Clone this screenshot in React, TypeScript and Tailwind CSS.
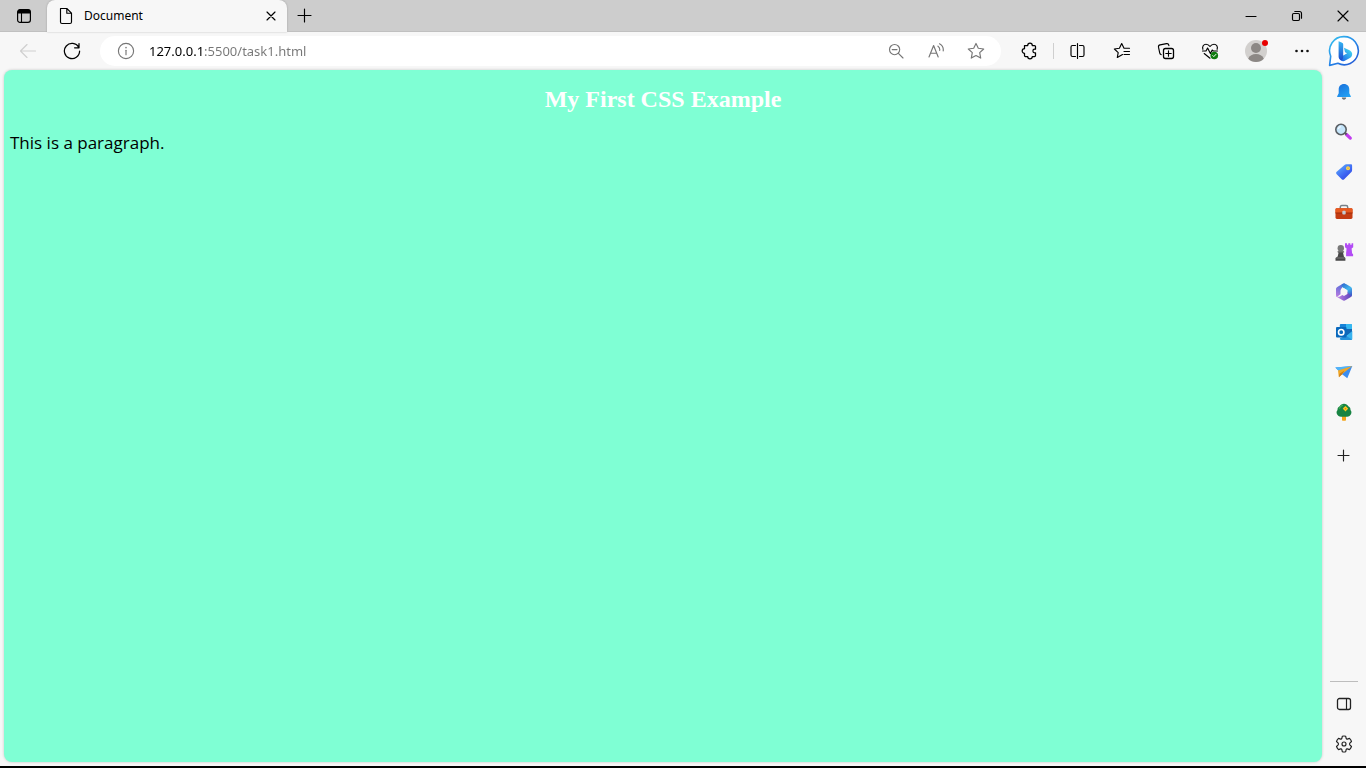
import type { ReactNode } from 'react';

type IconProps = { children: ReactNode; size?: number };

function Line({ children, size = 18 }: IconProps) {
  return (
    <svg
      width={size}
      height={size}
      viewBox={`0 0 ${size} ${size}`}
      fill="none"
      stroke="currentColor"
      strokeWidth="1.15"
      strokeLinecap="round"
      strokeLinejoin="round"
      aria-hidden="true"
    >
      {children}
    </svg>
  );
}

function Art({ children, size = 20 }: IconProps) {
  return (
    <svg width={size} height={size} viewBox={`0 0 ${size} ${size}`} fill="none" aria-hidden="true">
      {children}
    </svg>
  );
}

function IconButton({ label, className, children }: { label: string; className: string; children: ReactNode }) {
  return (
    <button type="button" aria-label={label} className={`flex shrink-0 items-center justify-center ${className}`}>
      {children}
    </button>
  );
}

function TitleBar() {
  return (
    <header className="flex h-8 shrink-0 items-stretch bg-[#cdcdcd] text-black">
      <IconButton label="Tab actions" className="w-[47px] border-b border-[#c0c0c0]">
        <Art size={16}>
          <rect x="1.6" y="1.6" width="12.8" height="12.8" rx="2.4" stroke="#000" strokeWidth="1.2" />
          <path d="M1.6 5.5V4a2.4 2.4 0 0 1 2.4-2.4h8A2.4 2.4 0 0 1 14.4 4v1.5z" fill="#000" />
          <path d="M5.5 5v9.4" stroke="#000" strokeWidth="1.1" />
        </Art>
      </IconButton>
      <div className="flex w-60 shrink-0 items-center rounded-t-lg bg-[#f7f7f7] pr-2 pl-2.5 shadow-[0_0_2px_rgba(0,0,0,0.25)]">
        <Line>
          <path d="M3.5 1.5h6.3l4.7 4.7v8.8a1.5 1.5 0 0 1-1.5 1.5H5A1.5 1.5 0 0 1 3.5 15z M9.8 1.5v4.7h4.7" />
        </Line>
        <span className="ml-[9px] flex-1 text-xs">Document</span>
        <IconButton label="Close tab" className="size-4">
          <Line size={10}>
            <path d="M1 1l8 8M9 1l-8 8" />
          </Line>
        </IconButton>
      </div>
      <div className="flex flex-1 border-b border-[#c0c0c0]">
        <IconButton label="New tab" className="w-9">
          <Line size={16}>
            <path d="M7.5 1v13M1 7.5h13" />
          </Line>
        </IconButton>
        <div className="flex-1" />
        <IconButton label="Minimize" className="w-[46px]">
          <Line size={12}>
            <path d="M1 6.5h10" />
          </Line>
        </IconButton>
        <IconButton label="Restore" className="w-[46px]">
          <Line size={12}>
            <rect x="1.5" y="3.5" width="7" height="7" rx="1.2" />
            <path d="M3.8 1.5h4.7a2 2 0 0 1 2 2v4.7" />
          </Line>
        </IconButton>
        <IconButton label="Close window" className="w-[46px]">
          <Line size={12}>
            <path d="M1 1l10 10M11 1L1 11" />
          </Line>
        </IconButton>
      </div>
    </header>
  );
}

function AddressBar() {
  return (
    <div className="ml-1.5 flex h-[30px] min-w-0 flex-1 items-center rounded-full bg-white pr-[5px] pl-[17px] text-[#767676]">
      <Line>
        <circle cx="9" cy="9" r="7.6" />
        <path d="M9 8.2v4.5" />
        <path d="M9 5.5v.2" strokeWidth="1.5" />
      </Line>
      <input
        aria-label="Address"
        defaultValue="127.0.0.1:5500/task1.html"
        spellCheck={false}
        className="ml-3.5 h-5 min-w-0 flex-1 bg-[linear-gradient(90deg,#000_54px,#767676_54px)] bg-clip-text text-[13px] text-transparent caret-black outline-none"
      />
      <IconButton label="Zoom out" className="w-10">
        <Line size={16}>
          <circle cx="6.6" cy="6.6" r="5.1" />
          <path d="M10.4 10.4l4.6 4.6M4.2 6.6h4.8" />
        </Line>
      </IconButton>
      <IconButton label="Read aloud" className="w-10">
        <Line size={16}>
          <path d="M1 14L5.6 2.5 10.2 14M2.6 10.2h6M10 3.2c1.4 1 2 2.4 1.7 4.3M11.500 .8c2.700 1.500 4.200 3.800 3.700 7.200" />
        </Line>
      </IconButton>
      <IconButton label="Add to favorites" className="w-10">
        <Line>
          <path d="M9 1.4l2.3 4.9 5.400.7-4 3.700 1 5.400L9 13.500l-4.700 2.600 1-5.400L1.300 7l5.400-.7z" />
        </Line>
      </IconButton>
    </div>
  );
}

function BingLogo() {
  return (
    <svg width="32" height="32" viewBox="0 0 32 32" fill="none" aria-hidden="true">
      <defs>
        <linearGradient id="bing-ring" x1="4" y1="2" x2="28" y2="30" gradientUnits="userSpaceOnUse">
          <stop stopColor="#35bfee" />
          <stop offset=".5" stopColor="#2687e8" />
          <stop offset="1" stopColor="#2456d3" />
        </linearGradient>
        <linearGradient id="bing-stem" x1="12" y1="6" x2="15" y2="25" gradientUnits="userSpaceOnUse">
          <stop stopColor="#35b9f4" />
          <stop offset="1" stopColor="#1b49cc" />
        </linearGradient>
        <linearGradient id="bing-bowl" x1="23" y1="15" x2="13" y2="25" gradientUnits="userSpaceOnUse">
          <stop stopColor="#43d6ee" />
          <stop offset="1" stopColor="#1e68e8" />
        </linearGradient>
      </defs>
      <path d="M16.2 1.6a14.1 14.1 0 1 1-6.3 26.7L1.6 30.4l1.1-9.2A14.1 14.1 0 0 1 16.2 1.6z" fill="#fff" stroke="url(#bing-ring)" strokeWidth="1.6" strokeLinejoin="round" />
      <path d="M16 12.8l5 2.1c4 1.6 4.2 6 .9 8l-4.600 2.700c-2.500 1.400-5.500 0-5.900-2.900l7.700-4.400-2.100-1z" fill="url(#bing-bowl)" />
      <path d="M10.6 6.3l3 1.2c1.200.5 1.600 1.100 1.600 2.100v11.500c0 3.600-1.200 4.800-2.700 3.800-1.300-.8-1.900-2-1.900-3.500z" fill="url(#bing-stem)" />
    </svg>
  );
}

function Toolbar() {
  return (
    <nav aria-label="Toolbar" className="flex h-[38px] shrink-0 items-center pr-0.5 pl-1.5 text-black">
      <IconButton label="Back" className="w-11 text-[#cfcfcf]">
        <Line>
          <path d="M16.5 9h-15M8 2.5L1.5 9 8 15.5" />
        </Line>
      </IconButton>
      <IconButton label="Refresh" className="w-11">
        <Line>
          <path d="M15.7 5.4A7.6 7.6 0 1 0 16.6 9M16 1.6v4.2h-4.4" strokeWidth="1.25" />
        </Line>
      </IconButton>
      <AddressBar />
      <IconButton label="Extensions" className="ml-1.5 w-11">
        <Line>
          <path d="M4.5 3.5h3.2a2.3 2.3 0 0 1 4.6 0h2.2a1 1 0 0 1 1 1v2.7h-.8a1.8 1.8 0 0 0 0 3.6h.8v2.7a1 1 0 0 1-1 1h-2.2a2.3 2.3 0 0 1-4.6 0H5.5a1 1 0 0 1-1-1v-2.2a2.3 2.3 0 0 1 0-4.6z" strokeWidth="1.25" />
        </Line>
      </IconButton>
      <div className="mx-0.5 h-4 w-px bg-[#cfcfcf]" />
      <IconButton label="Split screen" className="w-11">
        <Line>
          <path d="M6.5 3.5h-3a1.5 1.5 0 0 0-1.5 1.5v8a1.5 1.5 0 0 0 1.5 1.5h3M10.5 3.5h3A1.5 1.5 0 0 1 15 5v8a1.5 1.5 0 0 1-1.5 1.5h-3M8.5 1.5v15" />
        </Line>
      </IconButton>
      <IconButton label="Favorites" className="w-11">
        <Line>
          <path d="M9.5 12.6L4.3 15.5l.9-4.9L1.4 7l5-.7 2.3-4.7L11 6.2h5.5M11 9.5h5.5M11 12.5h5.5" />
        </Line>
      </IconButton>
      <IconButton label="Collections" className="w-11">
        <Line>
          <rect x="6.5" y="6.5" width="10" height="10" rx="2" strokeWidth="1.3" />
          <path d="M11.5 8.8v5.4M8.8 11.5h5.4M4.3 12.7A2.2 2.2 0 0 1 2.7 10.9L1.5 5.2a2 2 0 0 1 1.6-2.3l6.4-1.3a2 2 0 0 1 2.3 1.6l.1.5" />
        </Line>
      </IconButton>
      <IconButton label="Browser essentials" className="w-11">
        <Line>
          <path d="M1.9 7.3C.9 4.7 2.6 2.2 5 2.2c1.8 0 3 .9 4 2.3 1-1.4 2.2-2.3 4-2.3 2.5 0 4.1 2.5 3.1 5.1M1.5 9H5l1.6-3 2.8 5.6L11.2 8l1 1h4.3M3.2 11.5L9 16.2" />
          <circle cx="13.3" cy="13.5" r="3.8" fill="#107c10" stroke="none" />
          <path d="M11.8 13.6l1 1 2.1-2.2" stroke="#fff" strokeWidth="1" />
        </Line>
      </IconButton>
      <IconButton label="Profile" className="w-12">
        <Art size={24}>
          <circle cx="12" cy="12" r="11" fill="#d2d0ce" />
          <circle cx="12" cy="9" r="5" fill="#8c8885" />
          <path d="M4.2 19.7C5.6 16.5 8.4 15 12 15s6.4 1.5 7.8 4.7A11 11 0 0 1 4.2 19.7z" fill="#8c8885" />
          <circle cx="21" cy="4" r="3" fill="#e80000" />
        </Art>
      </IconButton>
      <IconButton label="Settings and more" className="w-11">
        <Art size={16}>
          <circle cx="2.5" cy="8" r="1.3" fill="#111" />
          <circle cx="8" cy="8" r="1.3" fill="#111" />
          <circle cx="13.5" cy="8" r="1.3" fill="#111" />
        </Art>
      </IconButton>
      <IconButton label="Bing Chat" className="w-10">
        <BingLogo />
      </IconButton>
    </nav>
  );
}

const apps: { label: string; art: ReactNode }[] = [
  {
    label: 'Notifications',
    art: (
      <Art>
        <defs>
          <linearGradient id="bell" x1="6" y1="2" x2="14" y2="15" gradientUnits="userSpaceOnUse">
            <stop stopColor="#1b73dc" />
            <stop offset="1" stopColor="#23a2f5" />
          </linearGradient>
        </defs>
        <path d="M7.8 15.5h4.4c-.1 1.4-1 2.2-2.2 2.2s-2.1-.8-2.2-2.2z" fill="#6d7075" />
        <path d="M10 2c3.300 0 5.300 2.300 5.300 5.500v3.800l1.500 2.900c.2.500 0 .9-.6.900H3.800c-.6 0-.8-.4-.6-.9l1.500-2.900V7.500C4.700 4.300 6.700 2 10 2z" fill="url(#bell)" />
      </Art>
    ),
  },
  {
    label: 'Search',
    art: (
      <Art>
        <path d="M12.5 12.5l3.8 3.6" stroke="#c23cf0" strokeWidth="3.2" strokeLinecap="round" />
        <path d="M10.5 10.5l2 2" stroke="#55595e" strokeWidth="2" />
        <circle cx="7" cy="7.5" r="5.2" fill="#c5e5fa" stroke="#5b5f64" strokeWidth="1.6" />
        <path d="M4.3 7a3 3 0 0 1 2.500-2.300" stroke="#f2faff" strokeWidth="1.2" />
      </Art>
    ),
  },
  {
    label: 'Shopping',
    art: (
      <Art>
        <defs>
          <linearGradient id="tag" x1="4" y1="4" x2="15" y2="18" gradientUnits="userSpaceOnUse">
            <stop stopColor="#5ba8fb" />
            <stop offset=".6" stopColor="#3d63f2" />
            <stop offset="1" stopColor="#3146dc" />
          </linearGradient>
        </defs>
        <path d="M10.5 2.9c.5-.5 1.1-.7 1.7-.7h4.600c.8 0 1.300.5 1.300 1.300v4.700c0 .7-.2 1.200-.7 1.700l-7.200 7.300c-.8.800-1.700.8-2.500 0l-5-5c-.8-.8-.8-1.600 0-2.400z" fill="url(#tag)" />
        <circle cx="14" cy="6.2" r="2" fill="#ffd348" />
        <circle cx="14" cy="6.2" r=".6" fill="#b09a50" />
      </Art>
    ),
  },
  {
    label: 'Tools',
    art: (
      <Art>
        <path d="M6.3 7V5.2c0-1 .6-1.700 1.600-1.700h4.200c1 0 1.600.7 1.600 1.700V7" stroke="#778087" strokeWidth="1.5" />
        <rect x="1.5" y="6.2" width="17" height="10.8" rx="1.4" fill="#c33c12" />
        <path d="M1.500 7.500c0-.8.500-1.300 1.300-1.300h14.400c.8 0 1.300.5 1.300 1.300V11h-17z" fill="#e75a20" />
        <path d="M1.500 11h17" stroke="#9f2d0b" />
        <rect x="8.3" y="8.7" width="3.4" height="3.8" rx="1" fill="#c4cbd0" />
      </Art>
    ),
  },
  {
    label: 'Games',
    art: (
      <Art>
        <path d="M11 1.300h2v1.500h1.300V1.300h2v1.500h1.300V1.300h1.600v4l-1.600 1.200.5 4.800 1 1v2h-7V11l.5-4.500L11 5.300z" fill="#b34cf5" />
        <circle cx="6.8" cy="6.2" r="3.2" fill="#787878" />
        <path d="M3.600 9.300h6.500l-1 1.600.8 3.500 1.500 1.600v2.800H1.500V16l2.200-1.600.8-3.500z" fill="#484848" />
        <path d="M3.600 9.900h6.500M2.300 16h8.500" stroke="#7b7b7b" />
      </Art>
    ),
  },
  {
    label: 'Microsoft 365',
    art: (
      <Art>
        <defs>
          <linearGradient id="ring-left" x1="9" y1="2" x2="3" y2="14" gradientUnits="userSpaceOnUse">
            <stop stopColor="#4d6fd8" />
            <stop offset="1" stopColor="#b57ae0" />
          </linearGradient>
          <linearGradient id="ring-right" x1="9" y1="2" x2="17" y2="14" gradientUnits="userSpaceOnUse">
            <stop stopColor="#2f6fd0" />
            <stop offset=".5" stopColor="#41b8ee" />
            <stop offset="1" stopColor="#3c50c4" />
          </linearGradient>
          <linearGradient id="ring-bottom" x1="3" y1="15" x2="16" y2="16" gradientUnits="userSpaceOnUse">
            <stop stopColor="#c387e8" />
            <stop offset="1" stopColor="#6447be" />
          </linearGradient>
        </defs>
        <path d="M11 1.300L6.800 7.500V12l-4 3C2.200 14.500 2 13.700 2 12.800V7.300c0-1 .4-1.800 1.300-2.300l5-3c.9-.6 1.700-.8 2.700-.7z" fill="url(#ring-left)" />
        <path d="M8.300 2c1.200-.8 2.400-.8 3.600-.1l4.700 2.800c.9.6 1.400 1.400 1.400 2.500v5.500c0 .8-.2 1.500-.7 2.100L13.300 12V8.300L8.800 5.500C7.400 4.700 7.300 2.900 8.300 2z" fill="url(#ring-right)" />
        <path d="M2.200 13.700c1 1.300 2.600 1.300 4.100.5L10 12l3.300-2.200 4 5-5.500 3.300c-1.200.7-2.400.7-3.600 0l-4.700-2.800c-.7-.4-1.100-.9-1.300-1.600z" fill="url(#ring-bottom)" />
        <path d="M10 6.300l3.400 2v3.600L10 13.900l-3.400-2V8.300z" fill="#f7f7f7" />
      </Art>
    ),
  },
  {
    label: 'Outlook',
    art: (
      <Art>
        <rect x="5.8" y="2" width="12" height="11" rx="1" fill="#1683d8" />
        <path d="M12 2h5a1 1 0 0 1 1 1v4h-6z" fill="#35b8f1" />
        <path d="M6 7h12v4l-6 3.300L6 11z" fill="#1267b6" />
        <path d="M18.300 9v7.700c0 .7-.5 1.200-1.200 1.200H6.800c-.6 0-1-.4-1-.9l6.400-3z" fill="#37b3ef" />
        <path d="M12.200 14l6 3.500c-.3.300-.6.400-1.100.4H6.800L5.800 16z" fill="#2593dc" />
        <rect x="2" y="5" width="10.5" height="10.5" rx="1" fill="#0969bd" />
        <circle cx="7.2" cy="10.2" r="2.7" stroke="#fff" strokeWidth="1.6" />
      </Art>
    ),
  },
  {
    label: 'Drop',
    art: (
      <Art>
        <path d="M1.300 5.600l17-1.700-5 12.300-5.200-4z" fill="#3c8df0" />
        <path d="M1.300 5.600l17-1.700L4.800 9z" fill="#4fb4f8" />
        <path d="M4 8.500l14.300-4.600L7.500 12.500l-2.700 2.700z" fill="#f3a826" />
        <path d="M5 15.300l.6-3.500 5-3.300-2.700 4z" fill="#c97a16" />
      </Art>
    ),
  },
  {
    label: 'E-tree',
    art: (
      <Art>
        <path d="M8 12.500h4v5.300c0 .6-.4 1-1 1H9c-.6 0-1-.4-1-1z" fill="#f4a51c" />
        <path d="M10 1.800c2 0 3.500.9 4.300 2.500 1.700.8 2.300 2.200 2.200 3.700 1 1.200 1.200 2.500.6 3.900-.7 1.600-2.200 2.800-4 2.800H7c-1.800 0-3.400-1.200-4.100-2.800-.6-1.400-.4-2.700.6-3.900-.1-1.500.6-2.900 2.200-3.700C6.500 2.700 8 1.800 10 1.800z" fill="#188443" />
        <path d="M9 3.200C7.400 3.500 6 4.700 5.200 6.700" stroke="#41ae59" strokeWidth="1.3" />
        <path d="M11.500 4l1.300 1.300 1.400 1.400-1.400 1.400-1.300 1.300-1.400-1.300-1.300-1.400 1.300-1.400z" fill="#ffc91f" />
        <circle cx="11.500" cy="6.700" r=".8" fill="#e27819" />
      </Art>
    ),
  },
];

function Sidebar() {
  return (
    <aside aria-label="Sidebar" className="flex w-11 shrink-0 flex-col items-center py-0.5 text-[#222]">
      {apps.map((app) => (
        <IconButton key={app.label} label={app.label} className="size-10">
          {app.art}
        </IconButton>
      ))}
      <IconButton label="Customize sidebar" className="mt-1 size-10">
        <Line size={14}>
          <path d="M6.5 1v11M1 6.5h11" />
        </Line>
      </IconButton>
      <div className="flex-1" />
      <div className="mb-0.5 h-px w-7 bg-[#bdbdbd]" />
      <IconButton label="Hide sidebar" className="size-10">
        <Line size={16}>
          <rect x="1.5" y="2.5" width="13" height="11" rx="2" strokeWidth="1.3" />
          <path d="M10.5 2.5v11" />
        </Line>
      </IconButton>
      <IconButton label="Settings" className="size-10">
        <Line>
          <path d="M7.3 1.3Q9 .7 10.7 1.3L11.2 3.6Q11.5 4.3 12.3 4.1L14.5 3.4Q15.9 4.7 16.5 6.5L14.8 8.1Q14.3 9 14.8 9.9L16.5 11.5Q15.9 13.3 14.5 14.6L12.3 13.9Q11.5 13.7 11.2 14.4L10.7 16.7Q9 17.3 7.3 16.7L6.8 14.4Q6.5 13.7 5.7 13.9L3.5 14.6Q2.1 13.3 1.5 11.5L3.2 9.9Q3.7 9 3.2 8.1L1.5 6.5Q2.1 4.7 3.5 3.4L5.7 4.1Q6.5 4.3 6.8 3.6Z" />
          <circle cx="9" cy="9" r="2" />
        </Line>
      </IconButton>
    </aside>
  );
}

export default function App() {
  return (
    <div className="flex h-screen flex-col border-b-2 border-black bg-[#f7f7f7] font-['Noto_Sans','Open_Sans',sans-serif]">
      <TitleBar />
      <Toolbar />
      <div className="flex min-h-0 flex-1">
        <main className="mb-1 ml-1 min-w-0 flex-1 overflow-auto rounded-lg bg-[#7fffd4] px-1.5 pt-[15px] shadow-[0_0_3px_rgba(0,0,0,0.2)]">
          <h1 className="text-center font-['Liberation_Serif',serif] text-2xl leading-7 font-bold text-white">
            My First CSS Example
          </h1>
          <p className="mt-4 font-['Open_Sans','Noto_Sans',sans-serif] text-[17px] leading-7 text-black">
            This is a paragraph.
          </p>
        </main>
        <Sidebar />
      </div>
    </div>
  );
}
